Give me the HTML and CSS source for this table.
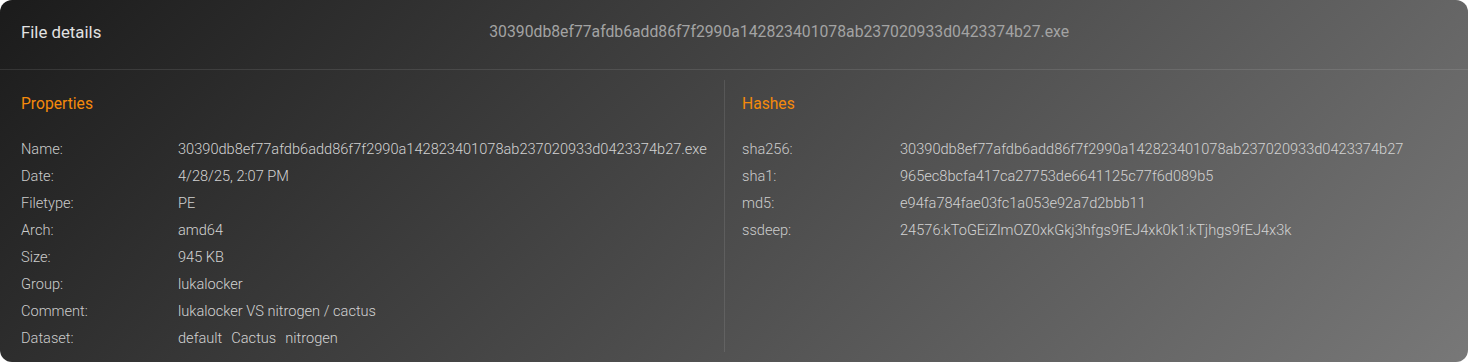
FILE: index.html
```html
<!DOCTYPE html>
<html>
<head>
<meta charset="utf-8">
<link rel="stylesheet" href="styles.css">
</head>
<body>
<div class="card">
  <div class="card-header">
    <div class="card-title">File details</div>
    <div class="card-file">30390db8ef77afdb6add86f7f2990a142823401078ab237020933d0423374b27.exe</div>
  </div>
  <div class="card-body">
    <section class="col col-left">
      <h3 class="col-title">Properties</h3>
      <dl class="kv kv-left">
        <dt>Name:</dt><dd>30390db8ef77afdb6add86f7f2990a142823401078ab237020933d0423374b27.exe</dd>
        <dt>Date:</dt><dd>4/28/25, 2:07 PM</dd>
        <dt>Filetype:</dt><dd>PE</dd>
        <dt>Arch:</dt><dd>amd64</dd>
        <dt>Size:</dt><dd>945 KB</dd>
        <dt>Group:</dt><dd>lukalocker</dd>
        <dt>Comment:</dt><dd>lukalocker VS nitrogen / cactus</dd>
        <dt>Dataset:</dt><dd class="tags"><span>default</span><span>Cactus</span><span>nitrogen</span></dd>
      </dl>
    </section>
    <section class="col col-right">
      <h3 class="col-title">Hashes</h3>
      <dl class="kv kv-right">
        <dt>sha256:</dt><dd>30390db8ef77afdb6add86f7f2990a142823401078ab237020933d0423374b27</dd>
        <dt>sha1:</dt><dd>965ec8bcfa417ca27753de6641125c77f6d089b5</dd>
        <dt>md5:</dt><dd>e94fa784fae03fc1a053e92a7d2bbb11</dd>
        <dt>ssdeep:</dt><dd>24576:kToGEiZlmOZ0xkGkj3hfgs9fEJ4xk0k1:kTjhgs9fEJ4x3k</dd>
      </dl>
    </section>
  </div>
</div>
</body>
</html>
```
FILE: styles.css
```css
html, body {
  margin: 0;
  padding: 0;
  background: #ffffff;
}
body {
  font-family: Roboto, "Liberation Sans", sans-serif;
}
.card {
  height: 362px;
  box-sizing: border-box;
  border-radius: 12px;
  background: linear-gradient(135deg, #1b1b1b 0%, #787878 100%);
  color: #cfcfcf;
  overflow: hidden;
}
.card-header {
  display: flex;
  align-items: center;
  height: 70px;
  box-sizing: border-box;
  padding: 0 21px 5px 21px;
  border-bottom: 1px solid rgba(255, 255, 255, 0.1);
}
.card-title {
  font-size: 16.8px;
  line-height: 20px;
  color: #e2e2e2;
}
.card-file {
  flex: 1;
  text-align: center;
  padding-left: 10px;
  font-size: 15.75px;
  line-height: 20px;
  color: #a3a3a3;
}
.card-body {
  display: flex;
  padding: 10px 0;
  height: 292px;
  box-sizing: border-box;
}
.col {
  padding-top: 14px;
  box-sizing: border-box;
}
.col-left {
  flex: 0 0 725px;
  padding-left: 21px;
  border-right: 1px solid rgba(255, 255, 255, 0.1);
}
.col-right {
  flex: 1;
  padding-left: 17px;
}
.col-title {
  margin: 0 0 22px 0;
  font-size: 15.65px;
  font-weight: 400;
  line-height: 20px;
  color: #f58a0b;
}
.kv {
  display: grid;
  margin: 0;
  font-size: 14.6px;
  font-weight: 300;
  line-height: 27px;
}
.kv-left {
  grid-template-columns: 157px 1fr;
}
.kv-right {
  grid-template-columns: 158px 1fr;
}
.kv dt {
  color: #cccccc;
}
.kv dd {
  margin: 0;
  color: #d2d2d2;
  white-space: nowrap;
}
.tags {
  display: flex;
  gap: 9px;
}
```
